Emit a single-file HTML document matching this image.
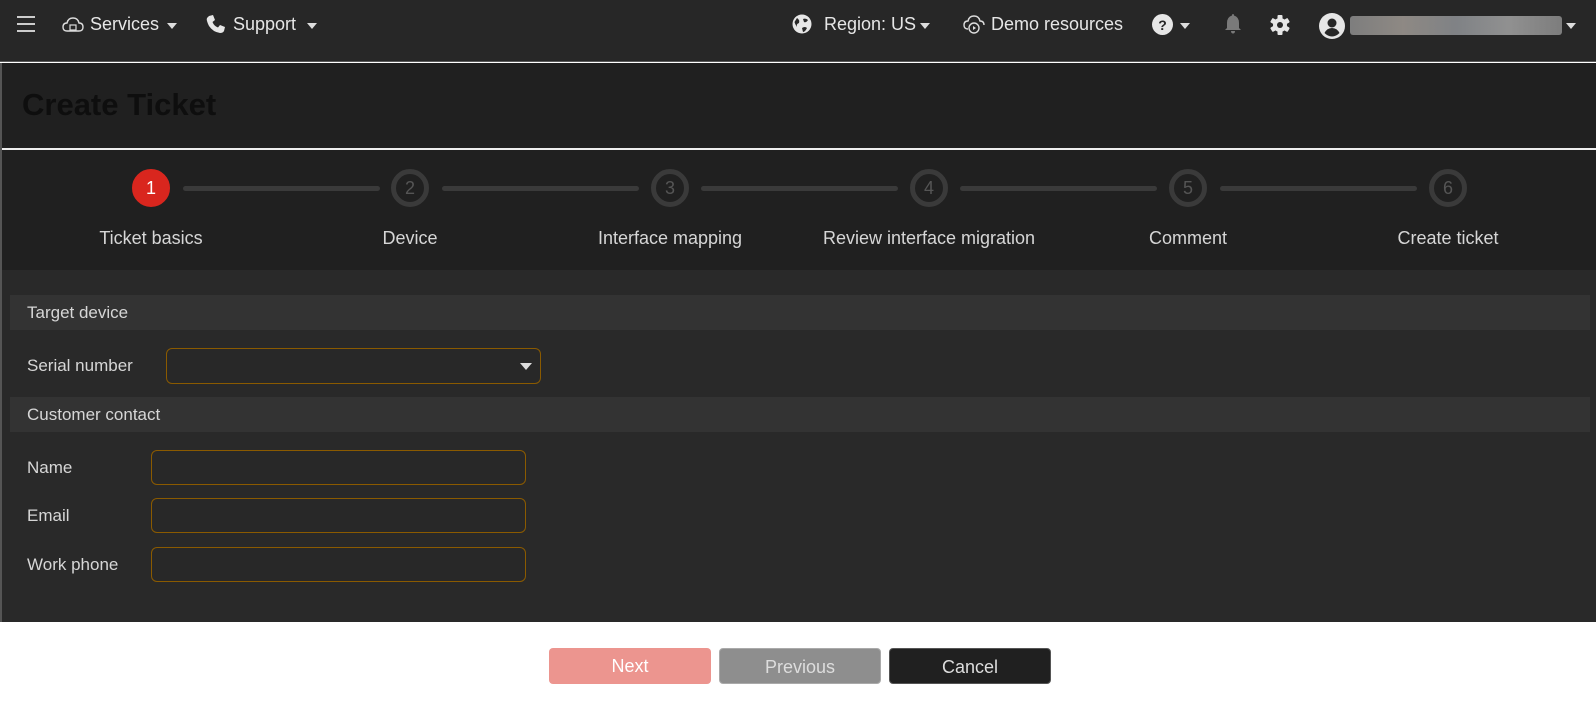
<!DOCTYPE html>
<html><head><meta charset="utf-8"><style>
*{margin:0;padding:0;box-sizing:border-box}
body{width:1596px;height:708px;background:#fff;font-family:"Liberation Sans",Arial,sans-serif;position:relative;overflow:hidden}
.a{position:absolute}
.top{left:0;top:0;width:1596px;height:62px;background:#272727;border-bottom:1px solid #5a5a5a}
.t{color:#e6e6e6;font-size:18px;white-space:nowrap}
.caret{width:0;height:0;border-left:5px solid transparent;border-right:5px solid transparent;border-top:6px solid #ddd}
.circle{width:38px;height:38px;border-radius:50%;border:5px solid #3a3a3a;color:#555;font-size:18px;text-align:center;line-height:28px}
.line{height:5px;background:#3a3a3a;border-radius:3px}
.lbl{color:#d6d6d6;font-size:18px;white-space:nowrap;transform:translateX(-50%)}
.bar{left:10px;width:1580px;height:35px;background:#333;color:#d6d6d6;font-size:17px;padding-left:17px;line-height:35px}
.inp{border:1px solid #8a5a00;border-radius:6px;background:#282828}
.fl{color:#d6d6d6;font-size:17px}
.btn{width:162px;height:36px;border-radius:4px;text-align:center;line-height:36px;font-size:18px}
</style></head><body>
<div class="a top"></div>
<div class="a" style="left:17px;top:16px;width:18px;height:2px;background:#ccc"></div>
<div class="a" style="left:17px;top:23px;width:18px;height:2px;background:#ccc"></div>
<div class="a" style="left:17px;top:30px;width:18px;height:2px;background:#ccc"></div>
<svg class="a" style="left:62px;top:16px" width="22" height="18" viewBox="0 0 22 18"><path d="M5 15 Q1 15 1 11 Q1 7 5 7 Q6 2 11 2 Q16 2 17 7 Q21 7 21 11 Q21 15 17 15 Z" fill="none" stroke="#ddd" stroke-width="1.4"/><rect x="8" y="9" width="6" height="5" fill="none" stroke="#ddd" stroke-width="1.2"/></svg>
<div class="a t" style="left:90px;top:14px">Services</div>
<div class="a caret" style="left:167px;top:23px"></div>
<svg class="a" style="left:206px;top:14px" width="20" height="20" viewBox="0 0 20 20"><path d="M3 2 L7 1 L9 6 L6.5 8 Q8 12 12 13.5 L14 11 L19 13 L18 17 Q17 19 14 19 Q7 18 3 12 Q0 6 1 4 Z" fill="#e6e6e6"/></svg>
<div class="a t" style="left:233px;top:14px">Support</div>
<div class="a caret" style="left:307px;top:23px"></div>

<svg class="a" style="left:792px;top:14px" width="20" height="20" viewBox="0 0 20 20"><circle cx="10" cy="10" r="9.5" fill="#e6e6e6"/><path d="M5 4 Q8 6 7 9 Q4 10 5 13 Q3 10 2.5 8 Z M11 5 Q14 4 16 6 Q14 9 12 8 Z M10 14 Q13 12 15 14 Q13 18 11 18 Z" fill="#272727"/></svg>
<div class="a t" style="left:824px;top:14px">Region: US</div>
<div class="a caret" style="left:920px;top:23px"></div>
<svg class="a" style="left:963px;top:15px" width="22" height="20" viewBox="0 0 22 20"><path d="M5 14 Q1 14 1 10 Q1 6 5 6 Q6 1 11 1 Q16 1 17 6 Q21 6 21 10" fill="none" stroke="#ddd" stroke-width="1.4"/><circle cx="11" cy="13" r="5" fill="none" stroke="#ddd" stroke-width="1.4"/><path d="M10 11 L13 13 L10 15 Z" fill="#ddd"/></svg>
<div class="a t" style="left:991px;top:14px">Demo resources</div>
<svg class="a" style="left:1152px;top:14px" width="21" height="21" viewBox="0 0 21 21"><circle cx="10.5" cy="10.5" r="10.5" fill="#e6e6e6"/><text x="10.5" y="16" text-anchor="middle" font-family="Liberation Sans" font-weight="bold" font-size="14" fill="#272727">?</text></svg>
<div class="a caret" style="left:1180px;top:23px"></div>
<svg class="a" style="left:1224px;top:13px" width="18" height="22" viewBox="0 0 18 22"><path d="M9 1 Q10 1 10 2.5 Q15 4 15 10 L15 15 L17 17 L1 17 L3 15 L3 10 Q3 4 8 2.5 Q8 1 9 1 Z" fill="#7a7a7a"/><path d="M7 18 L11 18 Q11 20.5 9 20.5 Q7 20.5 7 18 Z" fill="#7a7a7a"/></svg>
<svg class="a" style="left:1270px;top:15px" width="20" height="20" viewBox="0 0 20 20"><g fill="#e6e6e6" transform="translate(10 10)"><circle r="7"/><rect x="-2.5" y="-10" width="5" height="20" rx="1"/><rect x="-2.5" y="-10" width="5" height="20" rx="1" transform="rotate(60)"/><rect x="-2.5" y="-10" width="5" height="20" rx="1" transform="rotate(120)"/><circle r="3" fill="#272727"/></g></svg>
<svg class="a" style="left:1319px;top:13px" width="26" height="26" viewBox="0 0 26 26"><circle cx="13" cy="13" r="13" fill="#e6e6e6"/><circle cx="13" cy="10" r="4.5" fill="#272727"/><path d="M5.5 20 Q8 15 13 15 Q18 15 20.5 20 Q17 23.5 13 23.5 Q9 23.5 5.5 20 Z" fill="#272727"/></svg>
<div class="a" style="left:1350px;top:16px;width:212px;height:19px;background:linear-gradient(90deg,#8d8d8d,#a09a94,#8f9296,#a3a3a3,#8c8c8c);opacity:.85;border-radius:3px"></div>
<div class="a caret" style="left:1566px;top:23px"></div>

<div class="a" style="left:0;top:63px;width:1596px;height:86px;background:#202020"></div>
<div class="a" style="left:22px;top:87px;font-size:31px;font-weight:bold;color:#0e0e0e">Create Ticket</div>
<div class="a" style="left:0;top:148px;width:1596px;height:2px;background:#eee"></div>
<div class="a" style="left:0;top:150px;width:1596px;height:120px;background:#202020"></div>
<div class="a" style="left:0;top:270px;width:1596px;height:352px;background:#292929"></div>
<div class="a" style="left:0;top:63px;width:2px;height:559px;background:#555"></div>

<div class="a circle" style="left:132px;top:169px;background:#d9261e;border-color:#d9261e;color:#fff">1</div>
<div class="a circle" style="left:391px;top:169px">2</div>
<div class="a circle" style="left:651px;top:169px">3</div>
<div class="a circle" style="left:910px;top:169px">4</div>
<div class="a circle" style="left:1169px;top:169px">5</div>
<div class="a circle" style="left:1429px;top:169px">6</div>
<div class="a line" style="left:183px;top:186px;width:197px"></div>
<div class="a line" style="left:442px;top:186px;width:197px"></div>
<div class="a line" style="left:701px;top:186px;width:197px"></div>
<div class="a line" style="left:960px;top:186px;width:197px"></div>
<div class="a line" style="left:1220px;top:186px;width:197px"></div>
<div class="a lbl" style="left:151px;top:228px">Ticket basics</div>
<div class="a lbl" style="left:410px;top:228px">Device</div>
<div class="a lbl" style="left:670px;top:228px">Interface mapping</div>
<div class="a lbl" style="left:929px;top:228px">Review interface migration</div>
<div class="a lbl" style="left:1188px;top:228px">Comment</div>
<div class="a lbl" style="left:1448px;top:228px">Create ticket</div>

<div class="a bar" style="top:295px">Target device</div>
<div class="a fl" style="left:27px;top:356px">Serial number</div>
<div class="a inp" style="left:166px;top:348px;width:375px;height:36px"></div>
<div class="a" style="left:520px;top:363px;width:0;height:0;border-left:6px solid transparent;border-right:6px solid transparent;border-top:7px solid #ddd"></div>
<div class="a bar" style="top:397px">Customer contact</div>
<div class="a fl" style="left:27px;top:458px">Name</div>
<div class="a inp" style="left:151px;top:450px;width:375px;height:35px"></div>
<div class="a fl" style="left:27px;top:506px">Email</div>
<div class="a inp" style="left:151px;top:498px;width:375px;height:35px"></div>
<div class="a fl" style="left:27px;top:555px">Work phone</div>
<div class="a inp" style="left:151px;top:547px;width:375px;height:35px"></div>

<div class="a btn" style="left:549px;top:648px;background:#ec958f;color:#fff">Next</div>
<div class="a btn" style="left:719px;top:648px;background:#8e8e8e;color:#ddd;border:1px solid #aaa">Previous</div>
<div class="a btn" style="left:889px;top:648px;background:#202020;color:#ddd;border:1px solid #555">Cancel</div>
</body></html>
